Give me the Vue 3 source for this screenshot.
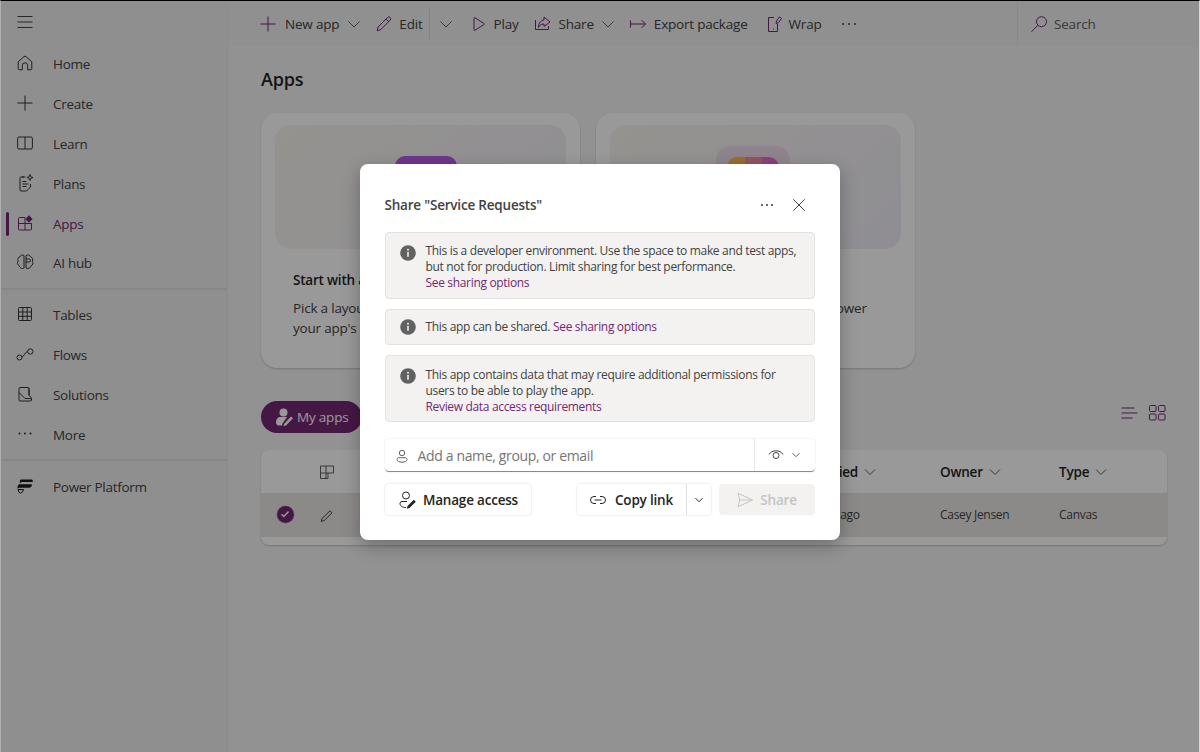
<script setup>
const icon = {
  home: ['M3.2 8.8 9 3.6a1.5 1.5 0 0 1 2 0l5.8 5.2v7a1 1 0 0 1-1 1h-3.1v-4.3a2.7 2.7 0 0 0-5.4 0v4.3H4.2a1 1 0 0 1-1-1z'],
  plus: ['M10 2.6v15M2.4 10h15.2'],
  book: ['M2.6 5.4A1.4 1.4 0 0 1 4 4h12a1.4 1.4 0 0 1 1.4 1.4v9.2A1.4 1.4 0 0 1 16 16H4a1.4 1.4 0 0 1-1.4-1.4zM10 4v12'],
  plans: ['M10.5 4H6a1 1 0 0 0-1 1v12a1 1 0 0 0 1 1h5.5l4-4v-3', 'M7.5 8.5h4M7.5 11h6M7.5 13.5h4', 'M8 3v2M15 1.5l.8 2.2 2.2.8-2.2.8-.8 2.2-.8-2.2-2.2-.8 2.2-.8z'],
  brain: ['M9 3.5C7.5 2.5 5.500 3 5 4.800 3 5 2.200 7.500 3.200 9 2 10.500 2.500 13 4.300 13.800 4.500 16 7.500 17.300 9 16zM11 3.500c1.500-1 4-.5 4.500 1.300 2 .5 2.800 2.800 1.800 4.400 1.200 1.500.6 4-1.200 4.600-.3 2.200-3.300 3.400-5.100 2.200zM11 7h3a1.500 1.500 0 0 1 0 3h-3'],
  table: ['M3.5 4.500a1 1 0 0 1 1-1h11a1 1 0 0 1 1 1v11a1 1 0 0 1-1 1h-11a1 1 0 0 1-1-1zM3.5 8h13M3.500 12.300h13M7.800 3.500v13M12.200 3.500v13'],
  flow: ['M7 13.500a2.500 2.500 0 1 1-5 0 2.500 2.500 0 0 1 5 0zM18 7.500a2.700 2.700 0 1 1-5.400 0 2.700 2.700 0 0 1 5.400 0zM7 13c2.500-.5 2.500-5 5.600-5.500'],
  solution: ['M4 4.500a1 1 0 0 1 1-1h8a1 1 0 0 1 1 1v7l2.500 2.300v2.200a1 1 0 0 1-1 1H5a1 1 0 0 1-1-1zM4 8.500l6 6 6.500.1M14 4v7.500']
}

const topNav = [
  { label: 'Home', d: icon.home },
  { label: 'Create', d: icon.plus },
  { label: 'Learn', d: icon.book },
  { label: 'Plans', d: icon.plans },
  { label: 'Apps', d: [], active: true }
]
const midNav = [
  { label: 'Tables', d: icon.table },
  { label: 'Flows', d: icon.flow },
  { label: 'Solutions', d: icon.solution }
]

const banners = [
  { lines: ['This is a developer environment. Use the space to make and test apps,', 'but not for production. Limit sharing for best performance.'], link: 'See sharing options' },
  { lines: ['This app contains data that may require additional permissions for', 'users to be able to play the app.'], link: 'Review data access requirements' }
]
</script>

<template>
  <div class="screen">
    <aside class="sidebar">
      <button class="burger">
        <svg width="20" height="20" viewBox="0 0 20 20"><path d="M2.5 4.500h15M2.500 10h15M2.500 15.500h15" /></svg>
      </button>
      <div class="nav-group first">
        <div v-for="item in topNav" :key="item.label" class="nav-item" :class="{ active: item.active }">
          <svg v-if="item.active" width="20" height="20" viewBox="0 0 20 20">
            <path d="M3.5 5.500a1 1 0 0 1 1-1h5.500v12.500H4.500a1 1 0 0 1-1-1zM3.500 10.500h13M10 10.500h6.500v5.500a1 1 0 0 1-1 1H10" />
            <path class="fill" d="m14 2.200 3.600 3.800-3.600 3.800-3.600-3.800z" />
          </svg>
          <svg v-else width="20" height="20" viewBox="0 0 20 20"><path v-for="d in item.d" :key="d" :d="d" /></svg>
          <span>{{ item.label }}</span>
        </div>
        <div class="nav-item ai">
          <svg width="20" height="20" viewBox="0 0 20 20"><path :d="icon.brain[0]" /></svg>
          <span>AI hub</span>
        </div>
      </div>
      <div class="nav-group mid">
        <div v-for="item in midNav" :key="item.label" class="nav-item">
          <svg width="20" height="20" viewBox="0 0 20 20"><path :d="item.d[0]" /></svg>
          <span>{{ item.label }}</span>
        </div>
        <div class="nav-item">
          <svg width="20" height="20" viewBox="0 0 20 20"><circle class="fill" cx="4.500" cy="9.500" r="1" /><circle class="fill" cx="10" cy="9.500" r="1" /><circle class="fill" cx="15.500" cy="9.500" r="1" /></svg>
          <span>More</span>
        </div>
      </div>
      <div class="nav-group last">
        <div class="nav-item">
          <svg width="20" height="20" viewBox="0 0 20 20" class="pp-icon">
            <path class="fill" d="M6 3.500h10.500a1.500 1.500 0 0 1 1 2.500H7a2 2 0 0 0-2 1.500c-.5-2 0-4 1-4zM4.500 8.200h11.500c.8 0 1.200.8.800 1.500-.5 1.200-1.500 2-2.800 2H4.800a2 2 0 0 0-2 1.200c-.6-2 .2-4.700 1.700-4.700z" />
            <path d="M3 13.500h5.500l-1 2.500-2 1.200-1.500-1z" />
          </svg>
          <span>Power Platform</span>
        </div>
      </div>
    </aside>

    <main class="main">
      <header class="topbar">
        <div class="cmd first-cmd">
          <svg class="ic" width="18" height="18" viewBox="0 0 18 18"><path d="M9 1.500v15M1.500 9h15" /></svg>
          <span>New app</span>
          <svg class="chev" width="14" height="14" viewBox="0 0 14 14"><path d="m1.500 4.500 5.500 5.500 5.500-5.500" /></svg>
        </div>
        <div class="cmd edit-cmd">
          <svg class="ic" width="18" height="18" viewBox="0 0 18 18"><path d="M3 12 12.500 2.500a1.800 1.800 0 0 1 2.700 2.600L5.700 14.700l-3.500 1zM11 4l3.200 3" /></svg>
          <span>Edit</span>
        </div>
        <div class="vsep"></div>
        <div class="cmd chev-cmd">
          <svg class="chev" width="14" height="14" viewBox="0 0 14 14"><path d="m1.500 4.500 5.500 5.500 5.500-5.500" /></svg>
        </div>
        <div class="cmd play-cmd">
          <svg class="ic" width="18" height="18" viewBox="0 0 18 18"><path d="M4 3.200a.6.600 0 0 1 .9-.5l9 5.700a.7.700 0 0 1 0 1.200l-9 5.700a.6.600 0 0 1-.9-.5z" /></svg>
          <span>Play</span>
        </div>
        <div class="cmd share-cmd">
          <svg class="ic" width="18" height="18" viewBox="0 0 18 18"><path d="M1.500 5v9.500h13V11M10 2l6 5-6 4.500V9C7 9 5.500 10 4.500 12.500 4.500 8 6.500 5.500 10 5z" /></svg>
          <span>Share</span>
          <svg class="chev" width="14" height="14" viewBox="0 0 14 14"><path d="m1.500 4.500 5.500 5.500 5.500-5.500" /></svg>
        </div>
        <div class="cmd export-cmd">
          <svg class="ic" width="18" height="18" viewBox="0 0 18 18"><path d="M1.500 5.500v7M1.500 9h15M12.500 5l4 4-4 4" /></svg>
          <span>Export package</span>
        </div>
        <div class="cmd wrap-cmd">
          <svg class="ic" width="18" height="18" viewBox="0 0 18 18"><path d="M9 2.500H3.500v14h9V9M8 14h1M11 8.500l.5-2.500L14.500 1.800l2 1.700-3 4.200z" /></svg>
          <span>Wrap</span>
        </div>
        <div class="more-dots"><i></i><i></i><i></i></div>
        <div class="search">
          <svg class="ic" width="18" height="18" viewBox="0 0 18 18"><path d="M16.500 6.700a5 5 0 1 1-10 0 5 5 0 0 1 10 0zM7.800 10.300 1.500 16.800" /></svg>
          <span>Search</span>
        </div>
      </header>

      <section class="content">
        <h1>Apps</h1>

        <div class="cards">
          <article class="card">
            <div class="hero">
              <div class="tile-purple"></div>
            </div>
            <h3>Start with a page design</h3>
            <p>Pick a layout and start building<br />your app's first screen from it</p>
          </article>
          <article class="card data-card">
            <div class="hero">
              <div class="tile-glass"><div class="tile-multi"></div></div>
            </div>
            <h3>Start with data</h3>
            <p>Use a table or your own data to power<br />your app's screens and forms</p>
          </article>
        </div>

        <div class="toolbar">
          <div class="pill">
            <svg width="20" height="20" viewBox="0 0 20 20"><circle cx="9.500" cy="5.500" r="4" /><path d="M2 15c0-3 2-5 4-5h7l-4.500 6.500-.5 2H5c-2 0-3-1.500-3-3.500z" /><path d="m10 17 7-7.500 2 1.800-7 7.200-2.500.5z" /></svg>
            <span>My apps</span>
          </div>
          <div class="views">
            <svg width="18" height="18" viewBox="0 0 18 18"><path d="M1.500 4h13M1.500 9h16M1.500 14h11" /></svg>
            <svg width="18" height="18" viewBox="0 0 18 18"><rect x="1.500" y="1.500" width="6.500" height="6" rx="1" /><rect x="10.500" y="1.500" width="6.500" height="6" rx="1" /><rect x="1.500" y="10" width="6.500" height="6" rx="1" /><rect x="10.500" y="10" width="6.500" height="6" rx="1" /></svg>
          </div>
        </div>

        <div class="grid-table">
          <div class="t-row t-head">
            <div></div>
            <div class="t-center">
              <svg class="col-icon" width="16" height="16" viewBox="0 0 16 16"><path d="M1.500 2h13v7H9v5.500H1.500zM1.500 9H9M7 2v12.500" /></svg>
            </div>
            <div class="name-cell">Name</div>
            <div class="sort">Modified <svg width="12" height="12" viewBox="0 0 12 12"><path d="m1 3.500 5 5 5-5" /></svg></div>
            <div class="sort">Owner <svg width="12" height="12" viewBox="0 0 12 12"><path d="m1 3.500 5 5 5-5" /></svg></div>
            <div class="sort">Type <svg width="12" height="12" viewBox="0 0 12 12"><path d="m1 3.500 5 5 5-5" /></svg></div>
          </div>
          <div class="t-row t-body">
            <div class="t-center check-cell">
              <span class="check">
                <svg width="10" height="10" viewBox="0 0 10 10"><path d="m1.500 5.300 2.300 2.200 4.700-5" /></svg>
              </span>
            </div>
            <div class="t-center">
              <svg width="16" height="16" viewBox="0 0 16 16" class="pen"><path d="M3 10.500 11 2.800l2 2-7.800 7.800-3 .8z" /></svg>
            </div>
            <div class="name-cell">Service Requests</div>
            <div>2 mins ago</div>
            <div>Casey Jensen</div>
            <div>Canvas</div>
          </div>
        </div>
      </section>
    </main>

    <div class="overlay">
      <div class="dialog">
        <div class="dlg-head">
          <h2>Share "Service Requests"</h2>
          <svg class="dots" width="16" height="16" viewBox="0 0 16 16"><circle cx="3" cy="8" r="1.100" /><circle cx="8" cy="8" r="1.100" /><circle cx="13" cy="8" r="1.100" /></svg>
          <svg class="close" width="16" height="16" viewBox="0 0 16 16"><path d="m2.300 2.300 11.400 11.400M13.700 2.300 2.300 13.700" /></svg>
        </div>

        <div class="banner">
          <svg class="info" width="16" height="16" viewBox="0 0 16 16"><circle cx="8" cy="8" r="7.800" /><rect x="7.300" y="6.800" width="1.400" height="5" /><circle cx="8" cy="4.700" r=".9" /></svg>
          <div>
            <div v-for="l in banners[0].lines" :key="l">{{ l }}</div>
            <a>{{ banners[0].link }}</a>
          </div>
        </div>

        <div class="banner single">
          <svg class="info" width="16" height="16" viewBox="0 0 16 16"><circle cx="8" cy="8" r="7.800" /><rect x="7.300" y="6.800" width="1.400" height="5" /><circle cx="8" cy="4.700" r=".9" /></svg>
          <div>This app can be shared. <a>See sharing options</a></div>
        </div>

        <div class="banner low">
          <svg class="info" width="16" height="16" viewBox="0 0 16 16"><circle cx="8" cy="8" r="7.800" /><rect x="7.300" y="6.800" width="1.400" height="5" /><circle cx="8" cy="4.700" r=".9" /></svg>
          <div>
            <div v-for="l in banners[1].lines" :key="l">{{ l }}</div>
            <a>{{ banners[1].link }}</a>
          </div>
        </div>

        <div class="picker">
          <div class="picker-input">
            <svg width="14" height="14" viewBox="0 0 14 14"><circle cx="7" cy="4" r="2.700" /><path d="M2 10.500c0-1 .8-1.800 1.800-1.800h6.400c1 0 1.800.8 1.800 1.800 0 1.600-2 2.700-5 2.700s-5-1.100-5-2.700z" /></svg>
            <span>Add a name, group, or email</span>
          </div>
          <div class="picker-perm">
            <svg width="16" height="16" viewBox="0 0 16 16"><path d="M1 7.500C2.500 5 5 3.800 8 3.800s5.500 1.200 7 3.700" /><circle cx="8" cy="8.500" r="3" /></svg>
            <svg class="small-chev" width="10" height="10" viewBox="0 0 10 10"><path d="m1.500 3.200 3.500 3.500 3.500-3.500" /></svg>
          </div>
        </div>

        <div class="actions">
          <button class="btn manage">
            <svg width="20" height="20" viewBox="0 0 20 20"><circle cx="9" cy="5.500" r="3.500" /><path d="M10 11.500H5a2 2 0 0 0-2 2c0 2.500 2.300 4 6 4" /><path class="fill" d="m10.500 16 6.300-6.300 2 2-6.300 6.300-2.700.7z" /></svg>
            <span>Manage access</span>
          </button>
          <div class="split">
            <button class="btn copy">
              <svg width="18" height="18" viewBox="0 0 18 18"><path d="M7 5.500H5a3.500 3.500 0 0 0 0 7h2M11 5.500h2a3.500 3.500 0 0 1 0 7h-2M5.500 9h7" /></svg>
              <span>Copy link</span>
            </button>
            <button class="btn copy-chev">
              <svg width="10" height="10" viewBox="0 0 10 10"><path d="m1.500 3.200 3.500 3.500 3.500-3.500" /></svg>
            </button>
          </div>
          <button class="btn send">
            <svg width="18" height="18" viewBox="0 0 18 18"><path d="M2 2.200 16.500 9 2 15.800l1.800-6.800zM3.800 9h12.700" /></svg>
            <span>Share</span>
          </button>
        </div>
      </div>
    </div>
  </div>
</template>

<style>
html, body {
  margin: 0;
  height: 100%;
  overflow: hidden;
}
</style>

<style scoped>
.screen {
  position: relative;
  display: flex;
  width: 1200px;
  height: 752px;
  box-sizing: border-box;
  border-top: 1px solid #000;
  border-left: 1px solid #b0b0b0;
  border-right: 1px solid #d8d8d8;
  background: #f5f5f5;
  font-family: "Open Sans", "Noto Sans", sans-serif;
  font-size: 14px;
  color: #424242;
  overflow: hidden;
}

svg path, svg rect, svg circle {
  fill: none;
  stroke: currentColor;
  stroke-width: 1;
  stroke-linejoin: round;
}
svg .fill {
  fill: currentColor;
  stroke: none;
}

/* sidebar */
.sidebar {
  width: 227px;
  flex: none;
  background: #efefef;
  border-right: 1px solid #ececec;
  box-sizing: border-box;
}
.burger {
  display: block;
  padding: 0;
  margin: 11px 0 0 14px;
  width: 20px;
  height: 20px;
  border: 0;
  background: none;
  color: #424242;
}
.nav-group {
  padding: 5px 0 4px;
  border-bottom: 2px solid #e0e0e0;
}
.nav-group.first {
  padding: 12px 0 5px;
}
.nav-group.last {
  padding-top: 6px;
  border-bottom: 0;
}
.nav-item {
  position: relative;
  display: flex;
  align-items: center;
  gap: 18px;
  height: 40px;
  padding-left: 14px;
  font-size: 13.5px;
  letter-spacing: -.3px;
}
.nav-item.ai {
  margin-top: -1px;
}
.nav-item svg {
  color: #333;
  flex: none;
  margin-bottom: 2px;
}
.nav-item.active,
.nav-item.active svg {
  color: #742774;
}
.nav-item.active::before {
  content: "";
  position: absolute;
  left: 5px;
  top: 8px;
  width: 3px;
  height: 24px;
  border-radius: 2px;
  background: #742774;
}
.nav-item .pp-icon {
  color: #1a1a1a;
}

/* main */
.main {
  flex: 1;
  min-width: 0;
  background: #f4f4f4;
}
.topbar {
  display: flex;
  align-items: center;
  height: 45px;
  background: #f0f0f0;
  font-size: 13.5px;
  letter-spacing: -.2px;
}
.cmd {
  display: flex;
  align-items: center;
  gap: 8px;
  flex: none;
}
.ic {
  color: #742774;
  flex: none;
}
.chev {
  color: #616161;
  flex: none;
}
.first-cmd { margin-left: 31px; }
.edit-cmd { margin-left: 14px; gap: 6px; }
.vsep {
  width: 1px;
  height: 30px;
  margin-left: 6px;
  background: #dcdcdc;
}
.chev-cmd { margin-left: 9px; }
.play-cmd { margin-left: 17px; gap: 6px; }
.share-cmd { margin-left: 15px; gap: 7px; }
.export-cmd { margin-left: 14px; gap: 7px; }
.wrap-cmd { margin-left: 17px; gap: 6px; }
.more-dots {
  display: flex;
  gap: 4px;
  margin-left: 20px;
}
.more-dots i {
  width: 2px;
  height: 2px;
  border-radius: 50%;
  background: #424242;
}
.search {
  display: flex;
  align-items: center;
  gap: 6px;
  align-self: stretch;
  margin-left: auto;
  width: 182px;
  box-sizing: border-box;
  padding-left: 12px;
  border-left: 1px solid #e4e4e4;
  color: #616161;
}

.content {
  padding: 0 32px 0 33px;
}
h1 {
  margin: 0;
  padding-top: 21px;
  font-size: 18px;
  line-height: 24px;
  font-weight: 600;
  color: #242424;
  letter-spacing: -.2px;
}
.cards {
  display: flex;
  gap: 16px;
  margin-top: 22px;
}
.card {
  width: 319px;
  height: 255px;
  box-sizing: border-box;
  padding: 12px 14px;
  border-radius: 16px;
  background: #fff;
  box-shadow: 0 1px 2px rgba(0,0,0,.2);
  overflow: hidden;
}
.hero {
  position: relative;
  height: 124px;
  border-radius: 16px;
  background: linear-gradient(135deg, #f7f5ef 0%, #f4f1f3 55%, #eeecf5 100%);
  overflow: hidden;
}
.tile-purple {
  position: absolute;
  left: 120px;
  top: 31px;
  width: 62px;
  height: 62px;
  border-radius: 10px;
  background: #b85cea;
}
.tile-glass {
  position: absolute;
  left: 106px;
  top: 21px;
  width: 74px;
  height: 74px;
  box-sizing: border-box;
  padding: 11px;
  border-radius: 14px;
  background: #ecdcec;
}
.tile-multi {
  width: 100%;
  height: 100%;
  border-radius: 10px;
  background: linear-gradient(90deg, #ffb850 0 35%, #f58ea0 35% 68%, #e870cc 68%);
}
.card h3 {
  margin: 22px 0 0;
  padding-left: 18px;
  font-size: 13.5px;
  line-height: 18px;
  font-weight: 600;
  letter-spacing: -.2px;
  color: #242424;
}
.card p {
  margin: 9px 0 0;
  padding-left: 18px;
  font-size: 13.5px;
  line-height: 20px;
  letter-spacing: -.2px;
  white-space: nowrap;
}
.data-card p {
  padding-left: 23px;
}

.toolbar {
  display: flex;
  align-items: center;
  justify-content: space-between;
  margin-top: 33px;
  height: 32px;
}
.pill {
  display: flex;
  align-items: center;
  gap: 3px;
  width: 101px;
  height: 32px;
  box-sizing: border-box;
  padding-left: 13px;
  border-radius: 16px;
  background: #742774;
  color: #fff;
  font-size: 13.5px;
  letter-spacing: -.2px;
}
.pill svg path, .pill svg circle {
  fill: #fff;
  stroke: none;
}
.views {
  display: flex;
  align-items: center;
  gap: 10px;
  color: #742774;
  margin-right: 1px;
  margin-bottom: 9px;
}
.grid-table {
  margin-top: 17px;
  border-radius: 8px;
  background: #fff;
  padding-bottom: 8px;
  box-shadow: 0 1px 2px rgba(0,0,0,.2);
  overflow: hidden;
}
.t-row {
  display: grid;
  grid-template-columns: 44px 44px 453px 138px 119px 1fr;
  align-items: center;
}
.t-head {
  height: 43px;
  font-weight: 600;
  font-size: 13.5px;
  letter-spacing: -.2px;
  color: #242424;
}
.t-body {
  height: 44px;
  box-sizing: border-box;
  padding-bottom: 2px;
  background: #eae7e4;
  font-size: 12px;
  letter-spacing: -.3px;
}
.name-cell {
  padding-left: 24px;
}
.col-icon {
  color: #616161;
}
.t-center {
  display: flex;
  justify-content: center;
}
.check-cell {
  padding-left: 4px;
}
.sort {
  display: flex;
  align-items: center;
  gap: 6px;
}
.sort svg {
  color: #616161;
}
.check {
  display: flex;
  align-items: center;
  justify-content: center;
  width: 17px;
  height: 17px;
  border-radius: 50%;
  background: #742774;
  color: #fff;
  box-shadow: 0 0 0 1px #d8d0dc;
}
.check svg path {
  stroke-width: 1.5;
}
.pen {
  color: #424242;
  margin-top: 3px;
}

/* dialog */
.overlay {
  position: absolute;
  inset: 0;
  display: flex;
  justify-content: center;
  align-items: flex-start;
  padding-top: 163px;
  background: rgba(0, 0, 0, .4);
}
.dialog {
  width: 480px;
  height: 376px;
  box-sizing: border-box;
  padding: 0 25px;
  margin-right: 1px;
  border-radius: 8px;
  background: #fff;
  box-shadow: 0 6px 18px rgba(0,0,0,.28);
  font-size: 12px;
  line-height: 16px;
  color: #424242;
  letter-spacing: -.33px;
}
.dlg-head {
  display: flex;
  align-items: center;
  height: 68px;
  padding-top: 14px;
  box-sizing: border-box;
}
h2 {
  flex: 1;
  margin: 0;
  font-size: 13.5px;
  font-weight: 600;
  color: #424242;
  letter-spacing: -.2px;
}
.dots circle {
  fill: #424242;
  stroke: none;
}
.dots { margin-right: 16px; }
.close {
  margin-right: 8px;
  color: #424242;
}
.banner {
  display: flex;
  gap: 10px;
  margin-bottom: 10px;
  padding: 10px 14px 7px;
  border: 1px solid #e4e2e0;
  border-radius: 4px;
  background: #f3f2f1;
}
.banner.single {
  padding: 9px 14px;
}
.banner.low {
  padding: 11px 14px 6px;
}
.banner a {
  color: #742774;
}
.info {
  flex: none;
  margin-top: 2px;
}
.single .info {
  margin-top: 0;
}
.low .info {
  margin-top: 1px;
}
.info circle:first-child {
  fill: #616161;
  stroke: none;
}
.info rect, .info circle:last-child {
  fill: #fff;
  stroke: none;
}
.picker {
  display: flex;
  height: 33px;
  margin-top: 17px;
  border-radius: 4px;
  box-shadow: 0 0 2px rgba(0,0,0,.14);
  border-bottom: 1px solid #8a8a8a;
  box-sizing: border-box;
}
.picker-input {
  flex: 1;
  display: flex;
  align-items: center;
  gap: 9px;
  padding: 1px 0 0 10px;
  font-size: 14px;
  color: #757575;
  letter-spacing: -.35px;
}
.picker-input svg { color: #616161; }
.picker-perm {
  display: flex;
  align-items: center;
  gap: 7px;
  width: 61px;
  box-sizing: border-box;
  padding-left: 13px;
  border-left: 1px solid #e6e6e6;
  color: #424242;
}
.small-chev { color: #616161; }
.actions {
  display: flex;
  margin-top: 12px;
  height: 31px;
}
.btn {
  display: flex;
  align-items: center;
  justify-content: center;
  gap: 6px;
  box-sizing: border-box;
  height: 31px;
  padding: 1px 0 0;
  border: 0;
  border-radius: 4px;
  background: #fff;
  box-shadow: 0 0 2px rgba(0,0,0,.2);
  font: inherit;
  font-size: 13.5px;
  font-weight: 600;
  color: #242424;
  letter-spacing: -.2px;
}
.manage { width: 146px; }
.split {
  display: flex;
  margin-left: 46px;
  border-radius: 4px;
  box-shadow: 0 0 2px rgba(0,0,0,.2);
}
.split .btn {
  box-shadow: none;
}
.copy {
  width: 110px;
  border-right: 1px solid #e0e0e0;
  border-radius: 4px 0 0 4px;
  gap: 8px;
}
.copy-chev {
  width: 24px;
  border-radius: 0 4px 4px 0;
}
.send {
  width: 96px;
  margin-left: 8px;
  background: #f3f2f1;
  box-shadow: none;
  color: #c4c4c4;
}
</style>
